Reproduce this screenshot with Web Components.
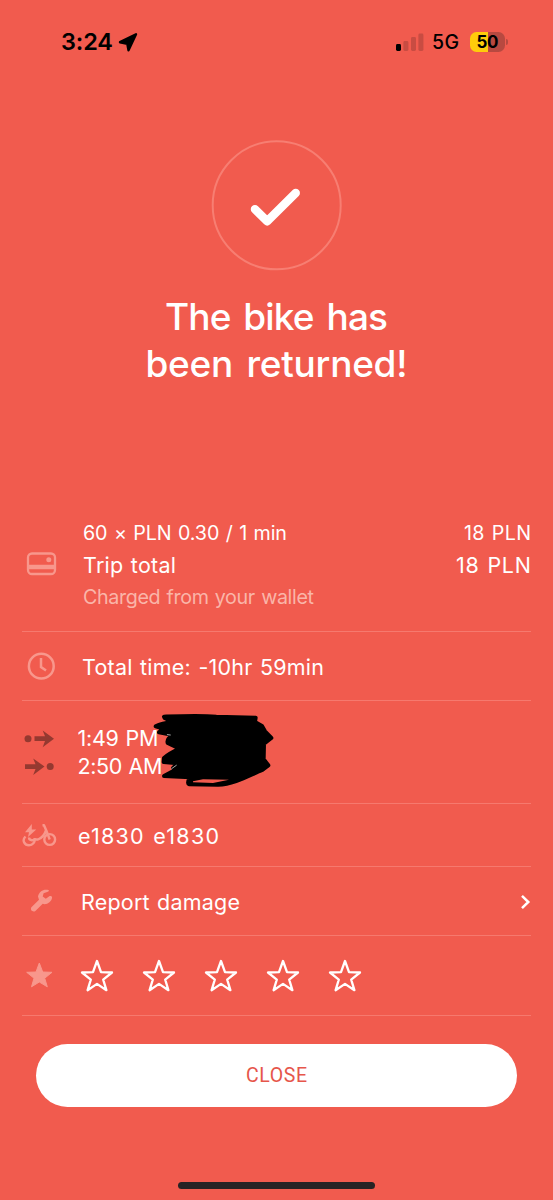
<!DOCTYPE html>
<html lang="en"><head><meta charset="utf-8"><title>Bike returned</title>
<style>html,body{margin:0;background:#f15b4e}</style></head><body>
<bike-receipt></bike-receipt>
<script>
const define=(name,html,setup)=>customElements.define(name,class extends HTMLElement{
  connectedCallback(){
    if(this.shadowRoot)return;
    this.attachShadow({mode:'open'}).innerHTML=html;
    if(setup)setup(this);
  }
});

// Text whose tracking is adjusted so that it spans the width given in "w".
define('fit-text','<style>:host{display:block;white-space:nowrap;width:max-content}span{display:inline-block}</style><span><slot></slot></span>',el=>{
  const s=el.shadowRoot.querySelector('span'),n=el.textContent.length;
  const d=(+el.getAttribute('w')-s.getBoundingClientRect().width)/(n-1);
  s.style.letterSpacing=d+'px';s.style.marginRight=-d+'px';
});

define('status-bar',`<style>
:host{display:flex;height:83px;box-sizing:border-box;padding:0 45px 0 61px;align-items:center;color:#000;font-family:Inter,sans-serif}
.time{font-size:23.5px;font-weight:600;line-height:30px}
.net{font-size:19.5px;font-weight:500;line-height:30px;margin-left:8px}
svg{display:block}.loc{margin-left:5px}.sig{margin-left:auto}
.bat{display:flex;align-items:center;margin-left:11px}
.cell{width:35px;height:20px;border-radius:6.5px;background:linear-gradient(90deg,#ffcc0b 52%,#b84940 52%);display:flex;justify-content:center;font-size:17px;line-height:20px;font-weight:650}
.tip{width:2px;height:6px;border-radius:0 2px 2px 0;background:#b84940;margin-left:1px}
</style>
<fit-text class="time" w="52">3:24</fit-text>
<svg class="loc" width="20" height="20" viewBox="118 31 20 20"><path d="M136 33.300 128.500 49.300 127.300 42.700 120 41.200Z" stroke="#000" stroke-width="2.400" stroke-linejoin="round"/></svg>
<svg class="sig" width="29" height="20" viewBox="395 31 29 20"><rect x="396" y="43" width="5" height="7" rx="1.4"/><g fill="#c84c42"><rect x="403.4" y="40" width="5" height="10" rx="1.4"/><rect x="411" y="36" width="5" height="14" rx="1.4"/><rect x="418.400" y="32.500" width="5" height="17.500" rx="1.4"/></g></svg>
<fit-text class="net" w="27">5G</fit-text>
<div class="bat"><div class="cell"><fit-text w="22">50</fit-text></div><div class="tip"></div></div>`);

define('success-hero',`<style>
:host{display:flex;flex-direction:column;align-items:center;height:417px;padding-top:57px;box-sizing:border-box;color:#fff;font:450 37px/47px Inter,sans-serif;word-spacing:.1em}
svg{display:block;margin-bottom:22px}
</style>
<svg width="131" height="131" viewBox="211 140 131 131" fill="none"><circle cx="276.700" cy="205.300" r="64" stroke="#f77e72" stroke-width="2"/><path d="M255 209.300 267.200 221.200 295.700 193" stroke="#fff" stroke-width="8.500" stroke-linecap="round" stroke-linejoin="round"/></svg>
<fit-text w="223">The bike has</fit-text><fit-text w="262">been returned!</fit-text>`);

define('receipt-row',`<style>
:host{display:flex;position:relative;box-sizing:border-box;border-bottom:1px solid #f6796e}
.text{flex:1;align-self:center;padding-top:2px}
::slotted(svg){display:block;flex:none}
</style><slot name="icon"></slot><div class="text"><slot></slot></div><slot name="end"></slot>`,el=>{
  el.style.height=el.getAttribute('h')+'px';
  el.shadowRoot.querySelector('.text').style.paddingLeft=el.getAttribute('inset')+'px';
});

define('star-rating',`<style>:host{display:flex;gap:26px;margin-bottom:2px}svg{display:block}</style>`,el=>{
  el.shadowRoot.innerHTML+='<svg width="36" height="36" viewBox="0 0 36 36"><path d="M18 3 22 14.200 33 14.500 24.200 21.600 27.400 32.200 18 25.900 8.600 32.200 11.800 21.600 3 14.500 14 14.200Z" fill="none" stroke="#fff" stroke-width="2.300" stroke-linejoin="round"/></svg>'.repeat(5);
});

define('close-button',`<style>
:host{display:block;margin:28px 36px 0}
button{display:flex;width:481px;height:63px;border:0;border-radius:32px;background:#fff;color:#e6564b;align-items:center;justify-content:center;font:450 19.500px/24px Roboto,sans-serif;padding:1px 0 0}
</style><button><slot></slot></button>`);

define('bike-receipt',`<style>
:host{display:block;width:553px;height:1200px;overflow:hidden;background:#f15b4e}
main{padding:0 22px;color:#fff;font:21.5px/28px Inter,sans-serif;word-spacing:.05em}
.line{display:flex;justify-content:space-between;height:32px;line-height:32px}
.line:last-of-type{margin-bottom:3px}
.times{margin-top:-2px}
.small{font-size:19.700px}.muted{color:#fab5a9}
.scribble{position:absolute;left:131px;top:10px}
.home{width:197px;height:7px;border-radius:4px;background:#272324;margin:75px auto 0 178px}
</style>
<status-bar></status-bar><success-hero></success-hero>
<main>
<receipt-row h="132" inset="21">
 <svg slot="icon" width="40" height="131" viewBox="22 500 40 131" fill="none"><rect x="28" y="553.500" width="27" height="20.500" rx="4" stroke="#f8978c" stroke-width="2.300"/><path d="M28 567H55" stroke="#f8978c" stroke-width="4.500"/><circle cx="48.800" cy="559.800" r="2.500" fill="#f8978c"/></svg>
 <div class="line small"><fit-text w="204">60 × PLN 0.30 / 1 min</fit-text><fit-text w="67">18 PLN</fit-text></div>
 <div class="line"><fit-text w="93">Trip total</fit-text><fit-text w="75">18 PLN</fit-text></div>
 <div class="line small muted"><fit-text w="231">Charged from your wallet</fit-text></div>
</receipt-row>
<receipt-row h="69" inset="20">
 <svg slot="icon" width="40" height="68" viewBox="22 632 40 68" fill="none" stroke="#f8978c" stroke-width="2.500"><circle cx="41.300" cy="666.200" r="12.400"/><path d="M41 658V667L46 670.500"/></svg>
 <fit-text w="242">Total time: -10hr 59min</fit-text>
</receipt-row>
<receipt-row h="103" inset="15.500">
 <svg slot="icon" width="40" height="102" viewBox="22 701 40 102" fill="#953930"><circle cx="28" cy="738.700" r="3.500"/><path d="M34.500 736.300H45L42.700 730.500 54 738.700 42.700 747.200 45 741H34.500Z"/><path d="M25 764.200H35.500L33.200 758.500 44.500 766.500 33.200 775 35.500 768.900H25Z"/><circle cx="50.200" cy="766.500" r="3.500"/></svg>
 <div class="times"><fit-text w="81">1:49 PM</fit-text><fit-text w="85">2:50 AM</fit-text></div>
 <svg class="scribble" width="123" height="80" viewBox="430 33 369 240" stroke="#000" stroke-linecap="round" stroke-linejoin="round"><path d="M463 50C520 48 570 46 620 50L738 53 736 66 757 78 766 94 785 114 763 131 762 178 776 196 758 210C720 225 675 252 625 254L538 253C532 248 537 239 542 232L463 228 495 211 490 204 503 190 462 186 463 174C480 160 495 153 510 146L474 129C471 118 480 112 490 105L448 97 461 86 438 79C455 70 477 68 490 67L465 54Z" stroke-width="12"/><path d="M550 244 580 238 658 239 610 249 550 247Z" fill="#f15b4e" stroke="none"/><path d="M473 104 482 105M486 206 500 196" stroke="#fff" stroke-width="2"/></svg>
</receipt-row>
<receipt-row h="63" inset="16">
 <svg slot="icon" width="40" height="62" viewBox="22 804 40 62" fill="none" stroke="#f8978c" stroke-width="2.400" stroke-linejoin="round"><path d="M25.500 836.500C21.500 840.500 24.700 845.300 29 845.300 33 845.300 34.800 842 34.800 839.500H38C42 838 44.500 835 46 830.500"/><path d="M42.500 825.200H44L46.500 831 49.700 839.500"/><path d="M29 837.500C29 841 34.800 841 34.800 838"/><circle cx="49.700" cy="839.500" r="5.400"/><path d="M31.800 824 25 832.200H29L28 837 36.300 829.500H31.800Z" fill="#f8978c" stroke="none"/></svg>
 <fit-text w="141">e1830 e1830</fit-text>
</receipt-row>
<receipt-row h="69" inset="19">
 <svg slot="icon" width="40" height="68" viewBox="22 867 40 68"><path d="M48.800 890.300C44 888.600 39 891.500 38 896.500L39 899.800 31.400 907.300C29.800 909.900 32.800 912.700 35.400 911L42.700 903.800C46.500 905.200 51.500 902 52.100 897.400 51.800 895.800 50 895.600 49 896.400L45.800 898.700 42.700 896.600 43.600 893.300 47.800 891.800C48.700 891.500 49.200 890.800 48.800 890.300Z" fill="#f8978c"/></svg>
 <fit-text w="159">Report damage</fit-text>
 <svg slot="end" width="11" height="68" viewBox="520 867 11 68" fill="none" stroke="#fff" stroke-width="2.500"><path d="M522 895.800 528.300 902 522 908.200"/></svg>
</receipt-row>
<receipt-row h="80" inset="16.500">
 <svg slot="icon" width="40" height="79" viewBox="22 936 40 79"><path d="M39.300 963 42.700 972 52 972.300 44.700 978.200 47.300 986.800 39.300 982 31.500 986.800 34 978.200 26.700 972.300 36 972Z" fill="#f8978c" stroke="#f8978c" stroke-linejoin="round"/></svg>
 <star-rating></star-rating>
</receipt-row>
</main>
<close-button><fit-text w="61">CLOSE</fit-text></close-button><div class="home"></div>`);
</script></body></html>
